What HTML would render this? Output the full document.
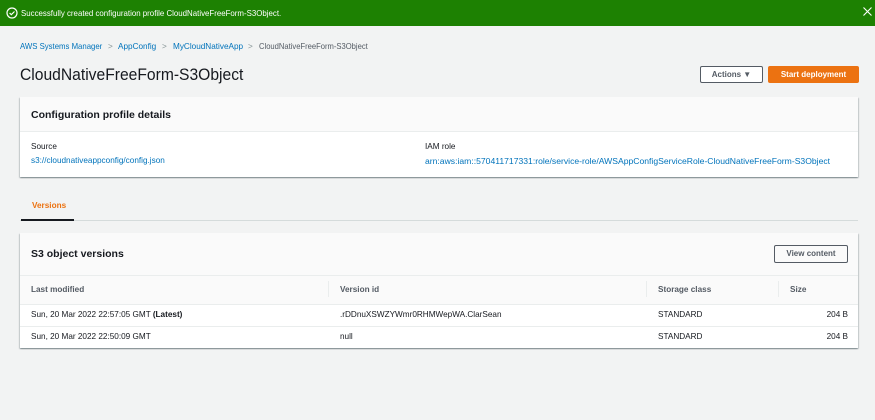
<html><head><style>
body{margin:0;width:875px;height:420px;background:#f2f3f3;font-family:"Liberation Sans",sans-serif;position:relative;overflow:hidden;color:#16191f}
.a{position:absolute;white-space:nowrap}
.lnk{color:#0073bb}
.card{position:absolute;left:20px;width:838px;background:#fff;box-shadow:0 1px 1px 0 rgba(0,28,36,.3),1px 1px 1px 0 rgba(0,28,36,.15),-1px 1px 1px 0 rgba(0,28,36,.15)}
.s{font-size:8.2px}
</style></head><body>
<div class="a" style="left:0;top:0;width:875px;height:26px;background:#1d8102"></div>
<svg class="a" style="left:6px;top:7px" width="12" height="12" viewBox="0 0 12 12"><circle cx="6" cy="6" r="5" fill="none" stroke="#fff" stroke-width="1.2"/><path d="M3.6 6l1.7 1.7L8.5 4.5" fill="none" stroke="#fff" stroke-width="1.2"/></svg>
<div class="a" style="left:21px;top:8px;font-size:8.3px;color:#fff;transform:scaleX(0.95);transform-origin:left">Successfully created configuration profile CloudNativeFreeForm-S3Object.</div>
<svg class="a" style="left:863px;top:7px" width="9" height="9" viewBox="0 0 9 9"><path d="M.5.5l8 8M8.5.5l-8 8" stroke="#fff" stroke-width="1.1"/></svg>
<div class="a lnk s" style="left:20px;top:42px;transform:scaleX(0.95);transform-origin:left">AWS Systems Manager</div>
<div class="a s" style="left:108px;top:42px;color:#879596">&gt;</div>
<div class="a lnk s" style="left:118px;top:42px">AppConfig</div>
<div class="a s" style="left:162px;top:42px;color:#879596">&gt;</div>
<div class="a lnk s" style="left:173px;top:42px">MyCloudNativeApp</div>
<div class="a s" style="left:248px;top:42px;color:#879596">&gt;</div>
<div class="a s" style="left:259px;top:42px;color:#545b64;transform:scaleX(0.93);transform-origin:left">CloudNativeFreeForm-S3Object</div>
<div class="a" style="left:20px;top:65px;font-size:17px;transform:scaleX(0.92);transform-origin:left">CloudNativeFreeForm-S3Object</div>
<div class="a" style="left:700px;top:66px;width:61px;height:15px;border:1px solid #545b64;border-radius:2px;background:#fff;font-size:8px;font-weight:bold;color:#545b64;text-align:center;line-height:15px">Actions ▼</div>
<div class="a" style="left:768px;top:66px;width:91px;height:17px;background:#ec7211;border-radius:2px;font-size:8px;font-weight:bold;color:#fff;text-align:center;line-height:17px">Start deployment</div>
<div class="card" style="top:97px;height:80px">
<div style="height:34px;background:#fafafa;border-bottom:1px solid #eaeded"></div>
<div class="a" style="left:11px;top:12px;font-size:10.5px;font-weight:bold">Configuration profile details</div>
<div class="a s" style="left:11px;top:45px">Source</div>
<div class="a lnk s" style="left:11px;top:59px">s3://cloudnativeappconfig/config.json</div>
<div class="a s" style="left:405px;top:45px">IAM role</div>
<div class="a lnk s" style="left:405px;top:59px;font-size:8.6px">arn:aws:iam::570411717331:role/service-role/AWSAppConfigServiceRole-CloudNativeFreeForm-S3Object</div>
</div>
<div class="a s" style="left:32px;top:201px;font-weight:bold;color:#ec7211">Versions</div>
<div class="a" style="left:20px;top:220px;width:838px;height:1px;background:#d5dbdb"></div>
<div class="a" style="left:21px;top:219px;width:53px;height:2px;background:#16191f"></div>
<div class="card" style="top:233px;height:115px">
<div style="height:42px;background:#fafafa"></div>
<div style="height:28px;background:#fafafa;border-top:1px solid #eaeded;border-bottom:1px solid #eaeded"></div>
<div style="height:21px;border-bottom:1px solid #eaeded"></div>
<div class="a" style="left:11px;top:15px;font-size:10.5px;font-weight:bold">S3 object versions</div>
<div class="a" style="left:754px;top:12px;width:72px;height:16px;border:1px solid #545b64;border-radius:2px;font-size:8px;font-weight:bold;color:#545b64;text-align:center;line-height:16px">View content</div>
<div class="a s" style="left:11px;top:52px;font-weight:bold;color:#545b64">Last modified</div>
<div class="a" style="left:308px;top:48px;width:1px;height:16px;background:#eaeded"></div>
<div class="a s" style="left:320px;top:52px;font-weight:bold;color:#545b64">Version id</div>
<div class="a" style="left:626px;top:48px;width:1px;height:16px;background:#eaeded"></div>
<div class="a s" style="left:638px;top:52px;font-weight:bold;color:#545b64">Storage class</div>
<div class="a" style="left:758px;top:48px;width:1px;height:16px;background:#eaeded"></div>
<div class="a s" style="left:770px;top:52px;font-weight:bold;color:#545b64">Size</div>
<div class="a s" style="left:11px;top:77px">Sun, 20 Mar 2022 22:57:05 GMT <b>(Latest)</b></div>
<div class="a s" style="left:320px;top:77px">.rDDnuXSWZYWmr0RHMWepWA.ClarSean</div>
<div class="a s" style="left:638px;top:77px">STANDARD</div>
<div class="a s" style="right:10px;top:77px">204 B</div>
<div class="a s" style="left:11px;top:99px">Sun, 20 Mar 2022 22:50:09 GMT</div>
<div class="a s" style="left:320px;top:99px">null</div>
<div class="a s" style="left:638px;top:99px">STANDARD</div>
<div class="a s" style="right:10px;top:99px">204 B</div>
</div>
</body></html>
